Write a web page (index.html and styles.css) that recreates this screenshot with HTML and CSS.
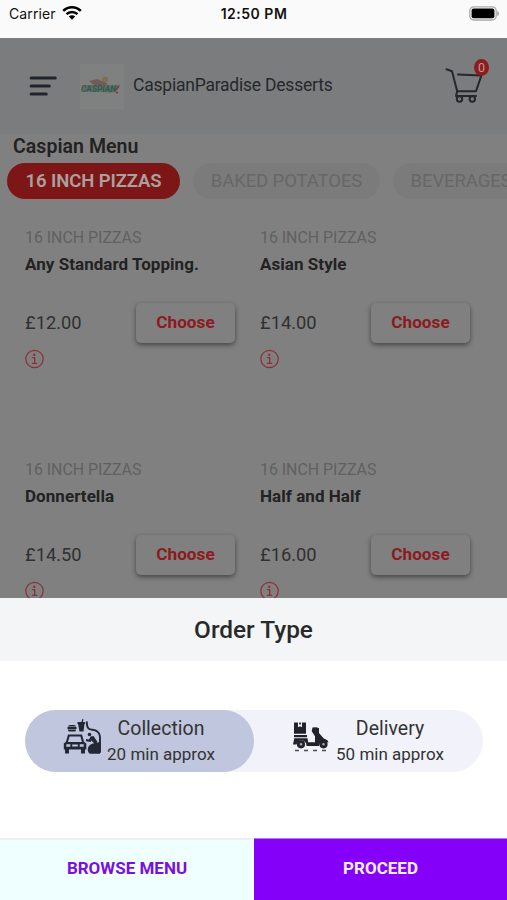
FILE: index.html
```html
<!DOCTYPE html>
<html lang="en">
<head>
<meta charset="utf-8">
<title>Caspian Menu</title>
<link rel="stylesheet" href="styles.css">
</head>
<body>
<svg class="defs" width="0" height="0" aria-hidden="true">
  <symbol id="info" viewBox="0 0 20 20">
    <circle cx="9.5" cy="10" r="8.7" fill="none" stroke="currentColor" stroke-width="1.2"/>
    <circle cx="9.3" cy="5.8" r="1.2" fill="currentColor"/>
    <path d="M7.1 8.6h2.6v5.6M6.9 14.4h5.3" fill="none" stroke="currentColor" stroke-width="1.3"/>
  </symbol>
</svg>
<div class="screen">
  <div class="status">
    <div class="carrier">Carrier
      <svg width="20" height="16" viewBox="0 0 20 16"><g fill="none" stroke="#000" stroke-width="2.5"><path d="M1.2 5.9C6.2 .9 13.8 .9 18.8 5.9"/><path d="M4.5 9.2C7.6 6.2 12.4 6.2 15.5 9.2"/></g><path d="M10 14.7L6.8 11.5C8.6 9.9 11.4 9.9 13.2 11.5Z"/></svg>
    </div>
    <div class="time">12:50 PM</div>
    <svg class="battery" width="31" height="15" viewBox="0 0 31 15"><rect x=".8" y=".8" width="26.4" height="13.2" rx="4" fill="#fafafa" stroke="#aaa" stroke-width="1.3"/><rect x="2.6" y="2.6" width="22.8" height="9.6" rx="2" fill="#000"/><path d="M28.4 5v5c2-.8 2-4.2 0-5z" fill="#999"/></svg>
  </div>
  <header class="header">
    <svg class="burger" width="28" height="21" viewBox="0 0 28 21"><path d="M2.2 2H26.2M2.2 10H20.2M2.2 18H17.2" stroke="#20242d" stroke-width="3.2" stroke-linecap="round"/></svg>
    <svg class="logo" width="44" height="45" viewBox="0 0 44 45">
      <rect width="44" height="45" fill="#7f8080"/>
      <circle cx="25" cy="15.5" r="3" fill="#827145"/><circle cx="25" cy="15.5" r="1.3" fill="#687765"/>
      <path d="M9 17l8-2 7 3 4 2-4 2-10-1z" fill="#73595a"/>
      <path d="M2 23l5-2 29 .5 4-1-2 4-5 4-25-1-6-2z" fill="#626f68"/>
      <text x="1" y="28" font-size="8.5" font-weight="700" font-style="italic" textLength="35" lengthAdjust="spacingAndGlyphs" fill="#2f5c4c">CASPIAN</text>
      <path d="M35 27l4-5M36 29l2-1" stroke="#743f43" stroke-width="1.5"/>
    </svg>
    <div class="name">CaspianParadise Desserts</div>
    <div class="cart">
      <svg width="38" height="38" viewBox="0 0 38 38"><g fill="none" stroke="#24272b" stroke-width="2" stroke-linecap="round" stroke-linejoin="round"><path d="M1.5 2.3L7 4.3L12.2 24.2H31L36.4 8.5L13 7.5"/><path d="M12.2 24.2L11 29H31"/><circle cx="14.5" cy="32" r="2.7"/><circle cx="27.3" cy="32" r="2.7"/></g></svg>
      <span class="badge">0</span>
    </div>
  </header>
  <main class="menu">
    <h1>Caspian Menu</h1>
    <nav class="chips">
      <div class="chip active">16 INCH PIZZAS</div>
      <div class="chip potatoes">BAKED POTATOES</div>
      <div class="chip beverages">BEVERAGES</div>
    </nav>
    <div class="grid">
      <article class="item"><div class="cat">16 INCH PIZZAS</div><h2>Any Standard Topping.</h2><div class="buy"><span>£12.00</span><button>Choose</button></div><svg class="info"><use href="#info"/></svg></article>
      <article class="item"><div class="cat">16 INCH PIZZAS</div><h2>Asian Style</h2><div class="buy"><span>£14.00</span><button>Choose</button></div><svg class="info"><use href="#info"/></svg></article>
      <article class="item"><div class="cat">16 INCH PIZZAS</div><h2>Donnertella</h2><div class="buy"><span>£14.50</span><button>Choose</button></div><svg class="info"><use href="#info"/></svg></article>
      <article class="item"><div class="cat">16 INCH PIZZAS</div><h2>Half and Half</h2><div class="buy"><span>£16.00</span><button>Choose</button></div><svg class="info"><use href="#info"/></svg></article>
    </div>
  </main>
  <section class="sheet">
    <h3>Order Type</h3>
    <div class="choices">
      <div class="choice selected">
        <svg width="40" height="38" viewBox="0 0 40 38">
          <g fill="#222835"><path d="M5 7.5q0-1.5 2-1.5h4q2 0 2 1.5zM4.5 8.1h9v1.9h-9zM5 10.5h8v1q0 1-2 1H7q-2 0-2-1zM14.5 3h4l.8-3 1.2.3-.7 2.7H22v2h-.5l-1 7.5h-4L15 5h-.5z"/>
          <path fill-rule="evenodd" d="M5 15.5h14l2 7.3 2.3 1.8v6H22v4h-4v-4H6v4H2v-4H.8v-6L3 22.8zM6.6 17.6L5 23h14l-1.6-5.4zM3.3 25.2v2.6h4v-2.6zM16.7 25.2v2.6h4v-2.6zM9.2 25.4v2h5.6v-2z"/>
          <circle cx="26.5" cy="15.5" r="1.8"/><path d="M37 23v11.7H27q-2.5-1.5-2.2-5 .5-3.5 4.2-5zM23 20l3 .5 1.5-3 3-.5 4 6-3 2-3-3.5-1 1.5-4.5-.8z"/></g>
          <path d="M23.8 2.5c0 11 5 6.8 9.5 9.3q3.7 2.3 3.7 7v15" fill="none" stroke="#222835" stroke-width="1.9"/>
        </svg>
        <div class="words"><div class="kind">Collection</div><div class="wait">20 min approx</div></div>
      </div>
      <div class="choice">
        <svg width="40" height="38" viewBox="0 0 40 38">
          <path fill="#222329" d="M2 3.5h4v4.7l2-.9 2 .9V3.5h4v11.2H2zM7.2 3.5h1.7v2.2l-.9-.5-.8.5zM2 16h13v2.3H2zM20.5 8.5q4-1 6.5.8V14l4.8 5.5 3.7 1.8 1 2.4-3-1.2q-5.5-1-6.5 4.5H14.5q0-5.5-5.5-5.5-3.3 0-4.5 4H1L2.3 19.3H15.5l.7 3.9h6.8v-6l-3.3-5z"/>
          <g fill="#a7a8b0" stroke="#222329" stroke-width="2.8"><circle cx="9" cy="25.3" r="2.7"/><circle cx="31.5" cy="25.3" r="2.7"/></g>
          <path d="M3 31.5h4M12 31.5h4M21 31.5h4M30 31.5h4" stroke="#4c4e56" stroke-width="1.3"/>
        </svg>
        <div class="words"><div class="kind">Delivery</div><div class="wait">50 min approx</div></div>
      </div>
    </div>
    <footer class="actions"><button class="browse">BROWSE MENU</button><button class="proceed">PROCEED</button></footer>
  </section>
</div>
</body>
</html>
```
FILE: styles.css
```css
* { box-sizing: border-box; }
body { margin: 0; font-family: Roboto, sans-serif; color: #222; }
h1, h2, h3 { margin: 0; }
button { border: 0; padding: 0; font: inherit; }
.defs { position: absolute; }
.screen { width: 507px; height: 900px; display: flex; flex-direction: column; overflow: hidden; background: #808080; }
.status { flex: none; height: 38px; padding: 6px 7px 0 9px; display: grid; grid-template-columns: 1fr auto 1fr; align-items: start; background: #fafafa; font: 14px/16px Inter, sans-serif; color: #111; }
.carrier { display: flex; gap: 6px; letter-spacing: .1px; }
.carrier svg { margin-top: -1px; }
.time { font-weight: 600; letter-spacing: .5px; margin-right: 1px; }
.battery { justify-self: end; }
.header { flex: none; height: 96px; padding: 0 17px 0 29px; display: flex; align-items: center; background: #7a7c7e; }
.burger { margin-right: 7px; }
.logo { margin-left: 16px; }
.name { margin: -2px 0 0 9px; font-size: 17.5px; letter-spacing: -.22px; color: #26282a; }
.cart { position: relative; margin-left: auto; width: 45px; height: 38px; }
.badge { position: absolute; right: 1px; top: -8px; width: 15px; height: 17px; border-radius: 50%; background: #8d1c1c; color: #b99; font-size: 12.5px; line-height: 17px; text-align: center; }
.menu { flex: none; height: 464px; overflow: hidden; }
h1 { height: 29px; padding: 1px 13px 0; font-size: 19.5px; line-height: 23px; font-weight: 600; letter-spacing: .05px; color: #222; }
.chips { display: flex; gap: 13px; padding-left: 7px; overflow: hidden; }
.chip { flex: none; height: 36px; width: 173px; border-radius: 18px; text-align: center; font-size: 18.5px; line-height: 36px; letter-spacing: -.1px; color: #676767; background: #7b7b7b; }
.chip.active { background: #7d1717; color: #aaa19f; font-weight: 600; }
.chip.potatoes { width: 187px; }
.chip.beverages { width: 136px; }
.grid { display: grid; grid-template-columns: 235px 235px; grid-auto-rows: 232px; padding: 28px 0 0 25px; }
.item { padding-right: 25px; }
.cat { font-size: 15.9px; line-height: 22px; color: #606060; }
h2 { margin-top: 3px; font-size: 17px; line-height: 24px; font-weight: 700; letter-spacing: .05px; color: #222; }
.buy { margin-top: 27px; display: flex; align-items: center; justify-content: space-between; font-size: 18.3px; color: #303030; }
.buy span { margin-top: -2px; }
.buy button { width: 99px; height: 40px; padding-bottom: 2px; border-radius: 5px; background: #808080; color: #8b1b1e; font-size: 17.2px; font-weight: 700; box-shadow: 0 2px 5px #444; }
.info { display: block; width: 20px; height: 20px; margin-top: 6px; color: #8b3038; }
.sheet { flex: 1; display: flex; flex-direction: column; background: #fff; }
h3 { height: 63px; background: #f3f5f7; text-align: center; font-size: 24.4px; line-height: 64px; font-weight: 500; color: #292929; }
.choices { margin: 49px 24px 0 25px; height: 62px; display: flex; border-radius: 31px; background: #f1f2fa; }
.choice { width: 229px; height: 62px; border-radius: 31px; display: flex; padding-left: 38px; align-items: flex-start; color: #333; }
.choice > svg { margin-top: 9px; }
.selected { background: #bfc6de; }
.words { margin-left: 3px; width: 110px; text-align: center; white-space: nowrap; }
.kind { padding-top: 7px; font-size: 19.5px; line-height: 24px; }
.wait { margin-top: 1px; font-size: 17px; line-height: 24px; }
.actions { margin-top: auto; height: 62px; display: flex; }
.actions button { height: 62px; padding-bottom: 3px; font-size: 17px; font-weight: 700; }
.actions .browse { width: 254px; padding-bottom: 5px; border-top: 2px solid #eef1f1; background: #efffff; color: #7910df; }
.proceed { flex: 1; border-top: 1px solid #b477ed; background: #8500f8; color: #f8efff; }
```
